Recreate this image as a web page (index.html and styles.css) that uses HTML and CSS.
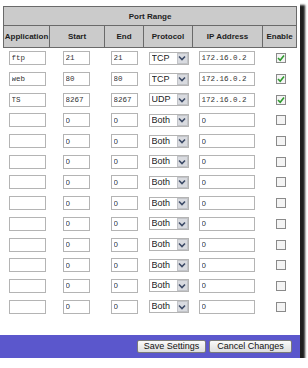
FILE: index.html
```html
<!DOCTYPE html>
<html lang="en">
<head>
    <meta charset="UTF-8">
    <title>Port Range Forwarding</title>
    <link rel="stylesheet" href="styles.css">
</head>
<body>

    <div class="frame">
        <table class="ports">
            <colgroup>
                <col class="c-app"><col class="c-start"><col class="c-end">
                <col class="c-proto"><col class="c-ip"><col class="c-en">
            </colgroup>
            <thead>
                <tr class="row-title"><th colspan="6">Port Range</th></tr>
                <tr class="row-head">
                    <th>Application</th><th>Start</th><th>End</th>
                    <th>Protocol</th><th>IP Address</th><th>Enable</th>
                </tr>
            </thead>
            <tbody>
                <tr>
                    <td><input class="f-app mono" type="text" value="ftp"></td>
                    <td><input class="f-start mono" type="text" value="21"></td>
                    <td><input class="f-end mono" type="text" value="21"></td>
                    <td><span class="sel"><select><option>TCP</option><option>UDP</option><option>Both</option></select><span class="sel-btn"><svg viewBox="0 0 8 6" width="8" height="6"><path d="M1 1.5 L4 4.5 L7 1.5" fill="none" stroke="#3c4a66" stroke-width="1.6"/></svg></span></span></td>
                    <td><input class="f-ip mono" type="text" value="172.16.0.2"></td>
                    <td><span class="chk on"><svg viewBox="0 0 8 8" width="8" height="8"><path d="M1 4 L3.2 6.2 L7 1.5" fill="none" stroke="#2e9a2e" stroke-width="1.6"/></svg></span></td>
                </tr>
                <tr>
                    <td><input class="f-app mono" type="text" value="web"></td>
                    <td><input class="f-start mono" type="text" value="80"></td>
                    <td><input class="f-end mono" type="text" value="80"></td>
                    <td><span class="sel"><select><option>TCP</option><option>UDP</option><option>Both</option></select><span class="sel-btn"><svg viewBox="0 0 8 6" width="8" height="6"><path d="M1 1.5 L4 4.5 L7 1.5" fill="none" stroke="#3c4a66" stroke-width="1.6"/></svg></span></span></td>
                    <td><input class="f-ip mono" type="text" value="172.16.0.2"></td>
                    <td><span class="chk on"><svg viewBox="0 0 8 8" width="8" height="8"><path d="M1 4 L3.2 6.2 L7 1.5" fill="none" stroke="#2e9a2e" stroke-width="1.6"/></svg></span></td>
                </tr>
                <tr>
                    <td><input class="f-app mono" type="text" value="TS"></td>
                    <td><input class="f-start mono" type="text" value="8267"></td>
                    <td><input class="f-end mono" type="text" value="8267"></td>
                    <td><span class="sel"><select><option>UDP</option><option>TCP</option><option>Both</option></select><span class="sel-btn"><svg viewBox="0 0 8 6" width="8" height="6"><path d="M1 1.5 L4 4.5 L7 1.5" fill="none" stroke="#3c4a66" stroke-width="1.6"/></svg></span></span></td>
                    <td><input class="f-ip mono" type="text" value="172.16.0.2"></td>
                    <td><span class="chk on"><svg viewBox="0 0 8 8" width="8" height="8"><path d="M1 4 L3.2 6.2 L7 1.5" fill="none" stroke="#2e9a2e" stroke-width="1.6"/></svg></span></td>
                </tr>
                <tr>
                    <td><input class="f-app" type="text" value=""></td>
                    <td><input class="f-start" type="text" value="0"></td>
                    <td><input class="f-end" type="text" value="0"></td>
                    <td><span class="sel"><select><option>Both</option><option>TCP</option><option>UDP</option></select><span class="sel-btn"><svg viewBox="0 0 8 6" width="8" height="6"><path d="M1 1.5 L4 4.5 L7 1.5" fill="none" stroke="#3c4a66" stroke-width="1.6"/></svg></span></span></td>
                    <td><input class="f-ip" type="text" value="0"></td>
                    <td><span class="chk"></span></td>
                </tr>
                <tr>
                    <td><input class="f-app" type="text" value=""></td>
                    <td><input class="f-start" type="text" value="0"></td>
                    <td><input class="f-end" type="text" value="0"></td>
                    <td><span class="sel"><select><option>Both</option><option>TCP</option><option>UDP</option></select><span class="sel-btn"><svg viewBox="0 0 8 6" width="8" height="6"><path d="M1 1.5 L4 4.5 L7 1.5" fill="none" stroke="#3c4a66" stroke-width="1.6"/></svg></span></span></td>
                    <td><input class="f-ip" type="text" value="0"></td>
                    <td><span class="chk"></span></td>
                </tr>
                <tr>
                    <td><input class="f-app" type="text" value=""></td>
                    <td><input class="f-start" type="text" value="0"></td>
                    <td><input class="f-end" type="text" value="0"></td>
                    <td><span class="sel"><select><option>Both</option><option>TCP</option><option>UDP</option></select><span class="sel-btn"><svg viewBox="0 0 8 6" width="8" height="6"><path d="M1 1.5 L4 4.5 L7 1.5" fill="none" stroke="#3c4a66" stroke-width="1.6"/></svg></span></span></td>
                    <td><input class="f-ip" type="text" value="0"></td>
                    <td><span class="chk"></span></td>
                </tr>
                <tr>
                    <td><input class="f-app" type="text" value=""></td>
                    <td><input class="f-start" type="text" value="0"></td>
                    <td><input class="f-end" type="text" value="0"></td>
                    <td><span class="sel"><select><option>Both</option><option>TCP</option><option>UDP</option></select><span class="sel-btn"><svg viewBox="0 0 8 6" width="8" height="6"><path d="M1 1.5 L4 4.5 L7 1.5" fill="none" stroke="#3c4a66" stroke-width="1.6"/></svg></span></span></td>
                    <td><input class="f-ip" type="text" value="0"></td>
                    <td><span class="chk"></span></td>
                </tr>
                <tr>
                    <td><input class="f-app" type="text" value=""></td>
                    <td><input class="f-start" type="text" value="0"></td>
                    <td><input class="f-end" type="text" value="0"></td>
                    <td><span class="sel"><select><option>Both</option><option>TCP</option><option>UDP</option></select><span class="sel-btn"><svg viewBox="0 0 8 6" width="8" height="6"><path d="M1 1.5 L4 4.5 L7 1.5" fill="none" stroke="#3c4a66" stroke-width="1.6"/></svg></span></span></td>
                    <td><input class="f-ip" type="text" value="0"></td>
                    <td><span class="chk"></span></td>
                </tr>
                <tr>
                    <td><input class="f-app" type="text" value=""></td>
                    <td><input class="f-start" type="text" value="0"></td>
                    <td><input class="f-end" type="text" value="0"></td>
                    <td><span class="sel"><select><option>Both</option><option>TCP</option><option>UDP</option></select><span class="sel-btn"><svg viewBox="0 0 8 6" width="8" height="6"><path d="M1 1.5 L4 4.5 L7 1.5" fill="none" stroke="#3c4a66" stroke-width="1.6"/></svg></span></span></td>
                    <td><input class="f-ip" type="text" value="0"></td>
                    <td><span class="chk"></span></td>
                </tr>
                <tr>
                    <td><input class="f-app" type="text" value=""></td>
                    <td><input class="f-start" type="text" value="0"></td>
                    <td><input class="f-end" type="text" value="0"></td>
                    <td><span class="sel"><select><option>Both</option><option>TCP</option><option>UDP</option></select><span class="sel-btn"><svg viewBox="0 0 8 6" width="8" height="6"><path d="M1 1.5 L4 4.5 L7 1.5" fill="none" stroke="#3c4a66" stroke-width="1.6"/></svg></span></span></td>
                    <td><input class="f-ip" type="text" value="0"></td>
                    <td><span class="chk"></span></td>
                </tr>
                <tr>
                    <td><input class="f-app" type="text" value=""></td>
                    <td><input class="f-start" type="text" value="0"></td>
                    <td><input class="f-end" type="text" value="0"></td>
                    <td><span class="sel"><select><option>Both</option><option>TCP</option><option>UDP</option></select><span class="sel-btn"><svg viewBox="0 0 8 6" width="8" height="6"><path d="M1 1.5 L4 4.5 L7 1.5" fill="none" stroke="#3c4a66" stroke-width="1.6"/></svg></span></span></td>
                    <td><input class="f-ip" type="text" value="0"></td>
                    <td><span class="chk"></span></td>
                </tr>
                <tr>
                    <td><input class="f-app" type="text" value=""></td>
                    <td><input class="f-start" type="text" value="0"></td>
                    <td><input class="f-end" type="text" value="0"></td>
                    <td><span class="sel"><select><option>Both</option><option>TCP</option><option>UDP</option></select><span class="sel-btn"><svg viewBox="0 0 8 6" width="8" height="6"><path d="M1 1.5 L4 4.5 L7 1.5" fill="none" stroke="#3c4a66" stroke-width="1.6"/></svg></span></span></td>
                    <td><input class="f-ip" type="text" value="0"></td>
                    <td><span class="chk"></span></td>
                </tr>
                <tr>
                    <td><input class="f-app" type="text" value=""></td>
                    <td><input class="f-start" type="text" value="0"></td>
                    <td><input class="f-end" type="text" value="0"></td>
                    <td><span class="sel"><select><option>Both</option><option>TCP</option><option>UDP</option></select><span class="sel-btn"><svg viewBox="0 0 8 6" width="8" height="6"><path d="M1 1.5 L4 4.5 L7 1.5" fill="none" stroke="#3c4a66" stroke-width="1.6"/></svg></span></span></td>
                    <td><input class="f-ip" type="text" value="0"></td>
                    <td><span class="chk"></span></td>
                </tr>
            </tbody>
        </table>

        <!-- barra viola con i bottoni -->
        <div class="actions">
            <button type="button">Save Settings</button>
            <button type="button">Cancel Changes</button>
        </div>
    </div>

</body>
</html>
```

FILE: styles.css
```css
body {
    margin: 0;
    padding: 0;
    background-color: #ffffff;
    font-family: 'Liberation Sans', Arial, sans-serif;
}

.frame {
    width: 300px;
    height: 358px;
    display: flex;
    flex-direction: column;
    background-color: #ffffff;
    box-shadow: 5px 5px 2px rgba(0, 0, 0, 0.88);
}

.ports {
    margin: 6px 0 0 3px;
    width: 293px;
    table-layout: fixed;
    border-collapse: collapse;
}

.c-app { width: 46px; }
.c-start { width: 55px; }
.c-end { width: 39px; }
.c-proto { width: 49px; }
.c-ip { width: 70px; }
.c-en { width: 34px; }

.ports th {
    background-color: #cbcbcb;
    border: 1px solid #6a6a6a;
    font-size: 8px;
    font-weight: bold;
    color: #1e1e1e;
    padding: 0;
    text-align: center;
}

.row-title th {
    height: 18px;
}

.row-head th {
    height: 21px;
}

.ports td {
    padding: 0;
    height: 20.7px;
    vertical-align: middle;
    font-size: 0;
}

.ports input[type="text"] {
    box-sizing: border-box;
    height: 14px;
    border: 1px solid #b4b4b4;
    padding: 0 0 0 2px;
    font-family: 'Liberation Sans', Arial, sans-serif;
    font-size: 8px;
    color: #333;
    background: #fff;
    vertical-align: middle;
}

.ports input.mono {
    font-family: 'Liberation Mono', 'Courier New', monospace;
    font-size: 7.5px;
}

.f-app { width: 37px; margin-left: 5px; }
.f-start { width: 27px; margin-left: 13px; }
.f-end { width: 27px; margin-left: 6px; }
.f-ip { width: 56px; margin-left: 6px; }

/* select con bottone freccia */
.sel {
    position: relative;
    display: inline-block;
    margin-left: 5px;
    vertical-align: middle;
}

.sel select {
    -webkit-appearance: none;
    appearance: none;
    box-sizing: border-box;
    width: 40px;
    height: 13px;
    border: 1px solid #b4b4b4;
    background: #fff;
    padding: 0 0 0 2px;
    margin: 0;
    font-family: 'Liberation Sans', Arial, sans-serif;
    font-size: 9px;
    line-height: 11px;
    color: #222;
    display: block;
}

.sel-btn {
    position: absolute;
    top: 1px;
    right: 1px;
    width: 11px;
    height: 11px;
    box-sizing: border-box;
    background-color: #d9dbe0;
    border: 1px solid #c2c4c8;
    display: flex;
    align-items: center;
    justify-content: center;
}

.chk {
    display: inline-block;
    box-sizing: border-box;
    width: 10px;
    height: 10px;
    margin-left: 13px;
    border: 1px solid #8a8a8a;
    background-color: #f4f4f4;
    vertical-align: middle;
    position: relative;
}

.chk svg {
    position: absolute;
    left: 0;
    top: 0;
}

.actions {
    margin-top: auto;
    height: 23px;
    background-color: #5b57cc;
    display: flex;
    justify-content: flex-end;
    align-items: center;
    gap: 3px;
    padding-right: 8px;
}

.actions button {
    height: 13px;
    padding: 0;
    border: 1px solid #7a7a7a;
    border-radius: 2px;
    background: linear-gradient(#fafafa, #dedede);
    font-family: 'Liberation Sans', Arial, sans-serif;
    font-size: 9px;
    line-height: 11px;
    color: #111;
}

.actions button:first-child {
    width: 69px;
}

.actions button:last-child {
    width: 83px;
}
```
